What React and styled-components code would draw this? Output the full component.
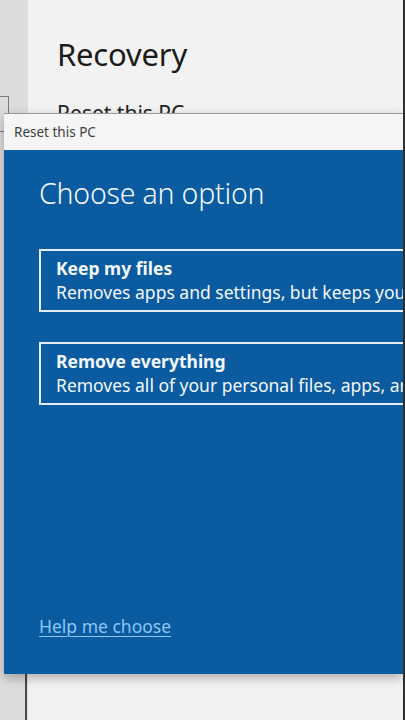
import styled, { createGlobalStyle } from 'styled-components';

const Global = createGlobalStyle`
  html, body {
    margin: 0;
    padding: 0;
    background: #f1f1f1;
  }
  * {
    box-sizing: border-box;
  }
`;

const Page = styled.div`
  position: relative;
  width: 405px;
  height: 720px;
  overflow: hidden;
  display: flex;
  font-family: "Noto Sans", "Open Sans", sans-serif;

  &::after {
    content: "";
    position: absolute;
    top: 0;
    right: 0;
    width: 2px;
    height: 100%;
    background: #2f2f2f;
  }
`;

const LeftStrip = styled.div`
  width: 28px;
  background: #dcdcdc;
  display: flex;
  flex-direction: column;
`;

const StubBox = styled.div`
  margin-top: 96px;
  width: 9px;
  height: 36px;
  border: 1px solid #7a7a7a;
  border-left: none;
`;

const BottomEdge = styled.div`
  margin-top: auto;
  height: 47px;
  width: 27px;
  border-right: 2px solid #4a4a4a;
`;

const Settings = styled.div`
  flex: 1;
  background: #f2f2f2;
  padding: 33px 0 0 29px;
`;

const Heading = styled.h1`
  margin: 0;
  font-size: 31px;
  font-weight: 400;
  color: #1b1b1b;
  letter-spacing: -0.2px;
`;

const SubHeading = styled.h2`
  margin: 24px 0 0;
  font-size: 21px;
  font-weight: 400;
  color: #222;
`;

const Dialog = styled.div`
  position: absolute;
  top: 113px;
  left: 4px;
  right: 2px;
  height: 561px;
  display: flex;
  flex-direction: column;
  overflow: hidden;
  box-shadow: 0 4px 10px rgba(0, 0, 0, 0.28);
  border-top: 1px solid #9a9a9a;
`;

const TitleBar = styled.div`
  height: 36px;
  background: #f5f5f5;
  display: flex;
  align-items: center;
  padding-left: 10px;
  font-size: 13.5px;
  color: #404040;
`;

const Body = styled.div`
  flex: 1;
  background: #0b5ba0;
  display: flex;
  flex-direction: column;
  padding: 24px 0 36px 35px;
`;

const Title = styled.div`
  font-size: 28.5px;
  font-weight: 300;
  color: #f4f7fb;
  letter-spacing: -0.2px;
`;

const Options = styled.div`
  margin-top: 37px;
  width: 440px;
  display: flex;
  flex-direction: column;
  gap: 30px;
`;

const Option = styled.div`
  height: 63px;
  border: 2px solid #e6edf5;
  padding: 5px 0 0 15px;
  color: #f4f7fb;
`;

const OptionName = styled.div`
  font-size: 17.5px;
  font-weight: 700;
  line-height: 24px;
`;

const OptionDesc = styled.div`
  font-size: 17.5px;
  line-height: 24px;
  white-space: nowrap;
`;

const HelpLink = styled.a`
  margin-top: auto;
  align-self: flex-start;
  font-size: 17.5px;
  color: #8fc6f3;
  text-decoration: underline;
  text-underline-offset: 3px;
  text-decoration-thickness: 1px;
`;

export default function App() {
  return (
    <>
      <Global />
      <Page>
        <LeftStrip>
          <StubBox />
          <BottomEdge />
        </LeftStrip>
        <Settings>
          <Heading>Recovery</Heading>
          <SubHeading>Reset this PC</SubHeading>
        </Settings>
        <Dialog>
          <TitleBar>Reset this PC</TitleBar>
          <Body>
            <Title>Choose an option</Title>
            <Options>
              <Option>
                <OptionName>Keep my files</OptionName>
                <OptionDesc>Removes apps and settings, but keeps your personal files.</OptionDesc>
              </Option>
              <Option>
                <OptionName>Remove everything</OptionName>
                <OptionDesc>Removes all of your personal files, apps, and settings.</OptionDesc>
              </Option>
            </Options>
            <HelpLink>Help me choose</HelpLink>
          </Body>
        </Dialog>
      </Page>
    </>
  );
}
